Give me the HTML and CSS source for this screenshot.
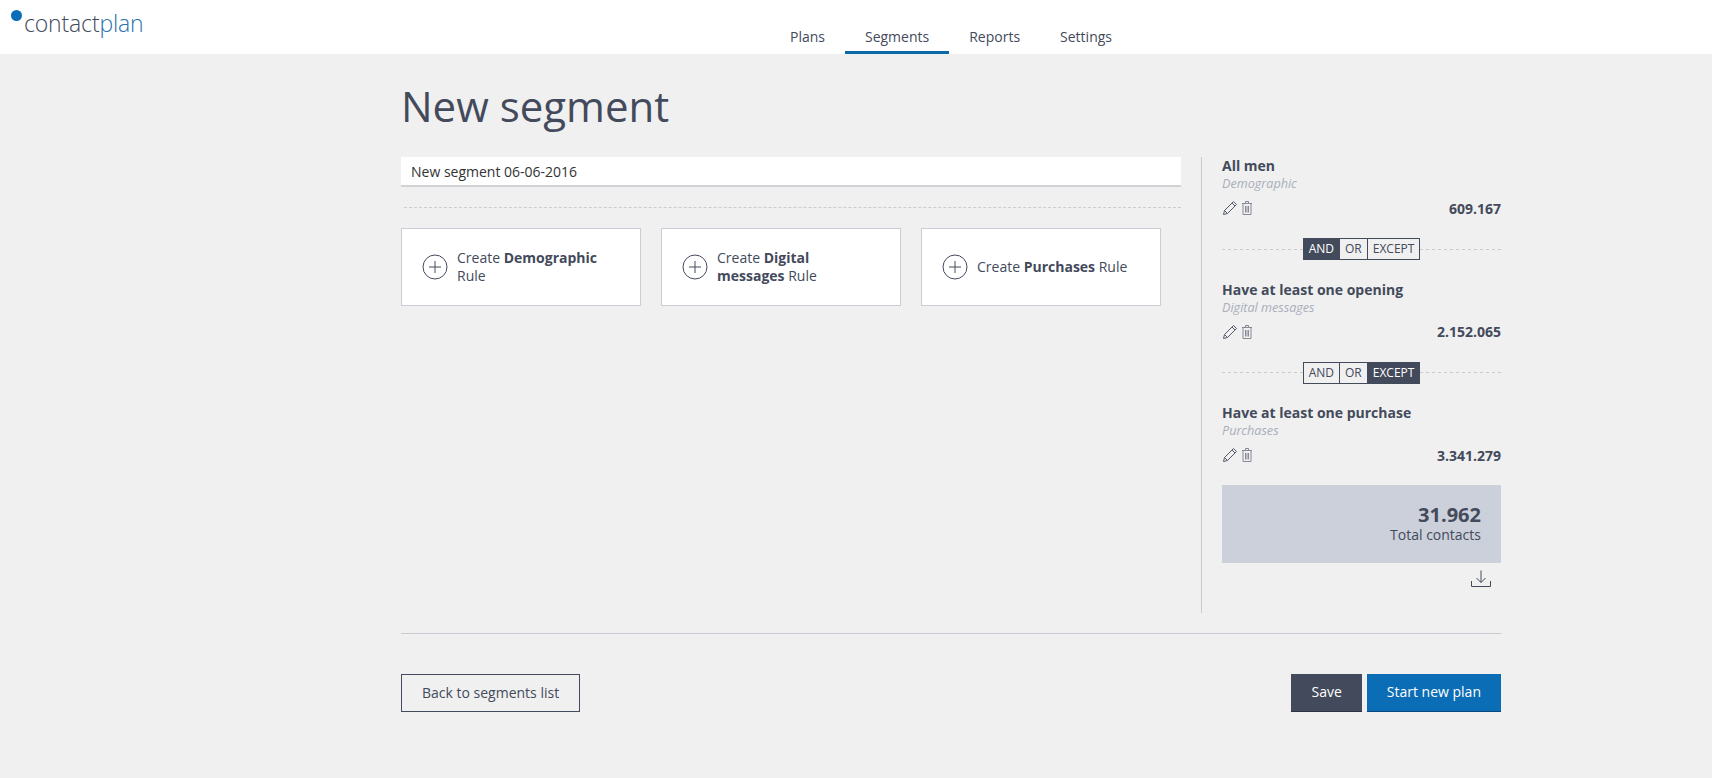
FILE: index.html
```html
<!DOCTYPE html>
<html lang="en">
  <head>
    <meta charset="UTF-8" />
    <title>New segment</title>
    <link rel="stylesheet" href="styles.css">
  </head>
  <body>
    <header class="topbar">
      <a class="logo"><span class="logo-dot"></span><span class="logo-text">contact<span class="logo-plan">plan</span></span></a>
      <nav class="nav">
        <a class="nav-item">Plans</a>
        <a class="nav-item active">Segments</a>
        <a class="nav-item">Reports</a>
        <a class="nav-item">Settings</a>
      </nav>
    </header>

    <main class="page">
      <h1 class="title">New segment</h1>

      <div class="columns">
        <section class="builder">
          <input class="name-input" type="text" value="New segment 06-06-2016" />
          <div class="dashed"></div>
          <div class="cards">
            <div class="card">
              <svg class="plus" viewBox="0 0 26 26"><circle cx="13" cy="13" r="12" /><path d="M13 7v12M7 13h12" /></svg>
              <span class="card-text">Create <b>Demographic</b> Rule</span>
            </div>
            <div class="card">
              <svg class="plus" viewBox="0 0 26 26"><circle cx="13" cy="13" r="12" /><path d="M13 7v12M7 13h12" /></svg>
              <span class="card-text">Create <b>Digital messages</b> Rule</span>
            </div>
            <div class="card">
              <svg class="plus" viewBox="0 0 26 26"><circle cx="13" cy="13" r="12" /><path d="M13 7v12M7 13h12" /></svg>
              <span class="card-text">Create <b>Purchases</b> Rule</span>
            </div>
          </div>
        </section>

        <aside class="summary">
          <div class="rule">
            <div class="rule-name">All men</div>
            <div class="rule-type">Demographic</div>
            <div class="rule-row">
              <span class="rule-icons">
                <svg class="icon" viewBox="0 0 16 16"><path d="M1.5 14.5l1-4L11.5 1.5l3 3-9 9zM2.5 10.5l3 3M10 3l3 3" /></svg>
                <svg class="icon icon-trash" viewBox="0 0 16 16"><path d="M3 3.500h10M6.500 3.500v-2h3v2M4 3.500v11h8v-11M6.500 6v6.500M8 6v6.500M9.500 6v6.500" /></svg>
              </span>
              <span class="rule-count">609.167</span>
            </div>
          </div>

          <div class="joiner">
            <div class="toggle">
              <span class="toggle-item on">AND</span><span class="toggle-item">OR</span><span class="toggle-item">EXCEPT</span>
            </div>
          </div>

          <div class="rule">
            <div class="rule-name">Have at least one opening</div>
            <div class="rule-type">Digital messages</div>
            <div class="rule-row">
              <span class="rule-icons">
                <svg class="icon" viewBox="0 0 16 16"><path d="M1.5 14.5l1-4L11.5 1.5l3 3-9 9zM2.5 10.5l3 3M10 3l3 3" /></svg>
                <svg class="icon icon-trash" viewBox="0 0 16 16"><path d="M3 3.500h10M6.500 3.500v-2h3v2M4 3.500v11h8v-11M6.500 6v6.500M8 6v6.500M9.500 6v6.500" /></svg>
              </span>
              <span class="rule-count">2.152.065</span>
            </div>
          </div>

          <div class="joiner">
            <div class="toggle">
              <span class="toggle-item">AND</span><span class="toggle-item">OR</span><span class="toggle-item on">EXCEPT</span>
            </div>
          </div>

          <div class="rule">
            <div class="rule-name">Have at least one purchase</div>
            <div class="rule-type">Purchases</div>
            <div class="rule-row">
              <span class="rule-icons">
                <svg class="icon" viewBox="0 0 16 16"><path d="M1.5 14.5l1-4L11.5 1.5l3 3-9 9zM2.5 10.5l3 3M10 3l3 3" /></svg>
                <svg class="icon icon-trash" viewBox="0 0 16 16"><path d="M3 3.500h10M6.500 3.500v-2h3v2M4 3.500v11h8v-11M6.500 6v6.500M8 6v6.500M9.500 6v6.500" /></svg>
              </span>
              <span class="rule-count">3.341.279</span>
            </div>
          </div>

          <div class="total">
            <div class="total-number">31.962</div>
            <div class="total-label">Total contacts</div>
          </div>
          <div class="download">
            <svg class="download-icon" viewBox="0 0 20 18"><path d="M10 0.500v12M5.500 8l4.500 4.500L14.500 8M0.500 11v5.500h19V11" /></svg>
          </div>
        </aside>
      </div>

      <footer class="actions">
        <button class="btn btn-outline">Back to segments list</button>
        <div class="actions-right">
          <button class="btn btn-dark">Save</button>
          <button class="btn btn-blue">Start new plan</button>
        </div>
      </footer>
    </main>
  </body>
</html>
```

FILE: styles.css
```css
body {
  font-family: "Open Sans", Arial, sans-serif;
  font-size: 14px;
  background-color: #f0f0f0;
  color: #434a5b;
  margin: 0;
  padding: 0;
}
.topbar {
  background-color: #fff;
  height: 54px;
  display: flex;
  justify-content: center;
  padding-left: 188px;
  position: relative;
}
.logo {
  position: absolute;
  left: 10px;
  top: 0;
}
.logo-dot {
  position: absolute;
  left: 1px;
  top: 10px;
  width: 11px;
  height: 11px;
  border-radius: 50%;
  background-color: #0a6db5;
}
.logo-text {
  display: block;
  margin: 7px 0 0 14px;
  font-size: 23px;
  font-weight: 300;
  line-height: 32px;
  letter-spacing: -0.15px;
}
.logo-plan {
  color: #2a72ad;
}
.nav {
  display: flex;
  height: 54px;
  margin-left: 2px;
}
.nav-item {
  padding: 27px 20px 0;
  line-height: 20px;
  box-sizing: border-box;
  height: 54px;
  border-bottom: 3px solid transparent;
}
.nav-item.active {
  border-bottom-color: #0a6aa8;
}
.page {
  width: 1100px;
  margin-left: 401px;
}
.title {
  font-size: 42px;
  font-weight: 400;
  line-height: 62px;
  margin: 21px 0 20px;
}
.columns {
  display: flex;
  padding-bottom: 20px;
  border-bottom: 1px solid #c8ccd2;
}
.builder {
  width: 800px;
  padding-right: 20px;
  box-sizing: border-box;
}
.name-input {
  display: block;
  width: 100%;
  height: 30px;
  box-sizing: border-box;
  border: none;
  border-bottom: 2px solid #d0d2d6;
  padding: 0 10px;
  font-family: inherit;
  font-size: 14px;
  color: #333;
  background-color: #fff;
}
.dashed {
  margin: 20px 0 20px 3px;
  border-top: 1px dashed #ccc;
}
.cards {
  display: flex;
  gap: 20px;
}
.card {
  width: 240px;
  height: 78px;
  box-sizing: border-box;
  background-color: #fff;
  border: 1px solid #c9cdd5;
  padding: 0 25px 0 20px;
  display: flex;
  align-items: center;
  gap: 9px;
  line-height: 18px;
}
.plus {
  width: 26px;
  height: 26px;
  flex: none;
  fill: none;
  stroke: #434a5b;
  stroke-width: 1;
}
.card-text {
  flex: 1;
}
.summary {
  width: 300px;
  height: 456px;
  box-sizing: border-box;
  border-left: 1px solid #c8ccd2;
  padding-left: 19px;
}
.rule-name {
  font-weight: 700;
  line-height: 18px;
  padding-left: 1px;
}
.rule-type {
  font-size: 12.6px;
  font-style: italic;
  line-height: 17px;
  color: #a9aebb;
  padding-left: 1px;
}
.rule-row {
  display: flex;
  justify-content: space-between;
  align-items: center;
  margin-top: 6px;
  height: 20px;
  padding-left: 1px;
}
.rule-icons {
  display: flex;
  gap: 1px;
}
.icon {
  width: 16px;
  height: 16px;
  fill: none;
  stroke: #555b6a;
  stroke-width: 1;
}
.icon-trash {
  stroke: #858a96;
}
.rule-count {
  font-weight: 700;
}
.joiner {
  margin: 20px 0 20.5px 1px;
  height: 22px;
  display: flex;
  justify-content: center;
  align-items: center;
  background-image: linear-gradient(to right, #ccc 50%, transparent 50%);
  background-size: 6px 1px;
  background-repeat: repeat-x;
  background-position: 0 50%;
}
.toggle {
  display: flex;
  border: 1px solid #434a5b;
  background-color: #f0f0f0;
  font-size: 12px;
  line-height: 20px;
}
.toggle-item {
  padding: 0 5px;
  border-left: 1px solid #434a5b;
}
.toggle-item:first-child {
  border-left: none;
}
.toggle-item.on {
  background-color: #434a5b;
  color: #fff;
}
.total {
  margin: 20px 0 0 1px;
  height: 78px;
  box-sizing: border-box;
  padding: 18px 20px 0;
  background-color: #ccd0da;
  text-align: right;
}
.total-number {
  font-size: 20px;
  font-weight: 700;
  line-height: 23px;
}
.total-label {
  line-height: 18px;
}
.download {
  display: flex;
  justify-content: flex-end;
  padding: 7px 10px 0 0;
}
.download-icon {
  width: 20px;
  height: 18px;
  fill: none;
  stroke: #434a5b;
  stroke-width: 1;
}
.actions {
  display: flex;
  justify-content: space-between;
  margin-top: 40px;
}
.actions-right {
  display: flex;
  gap: 5px;
}
.btn {
  height: 38px;
  box-sizing: border-box;
  font-family: inherit;
  font-size: 14px;
  padding: 0 20px 2px;
  border: none;
  cursor: pointer;
}
.btn-outline {
  background-color: transparent;
  border: 1px solid #434a5b;
  color: #434a5b;
}
.btn-dark {
  background-color: #434a5b;
  border-bottom: 1px solid #2d3340;
  color: #fff;
}
.btn-blue {
  background-color: #0a6db5;
  border-bottom: 1px solid #07497c;
  color: #fff;
}
```
